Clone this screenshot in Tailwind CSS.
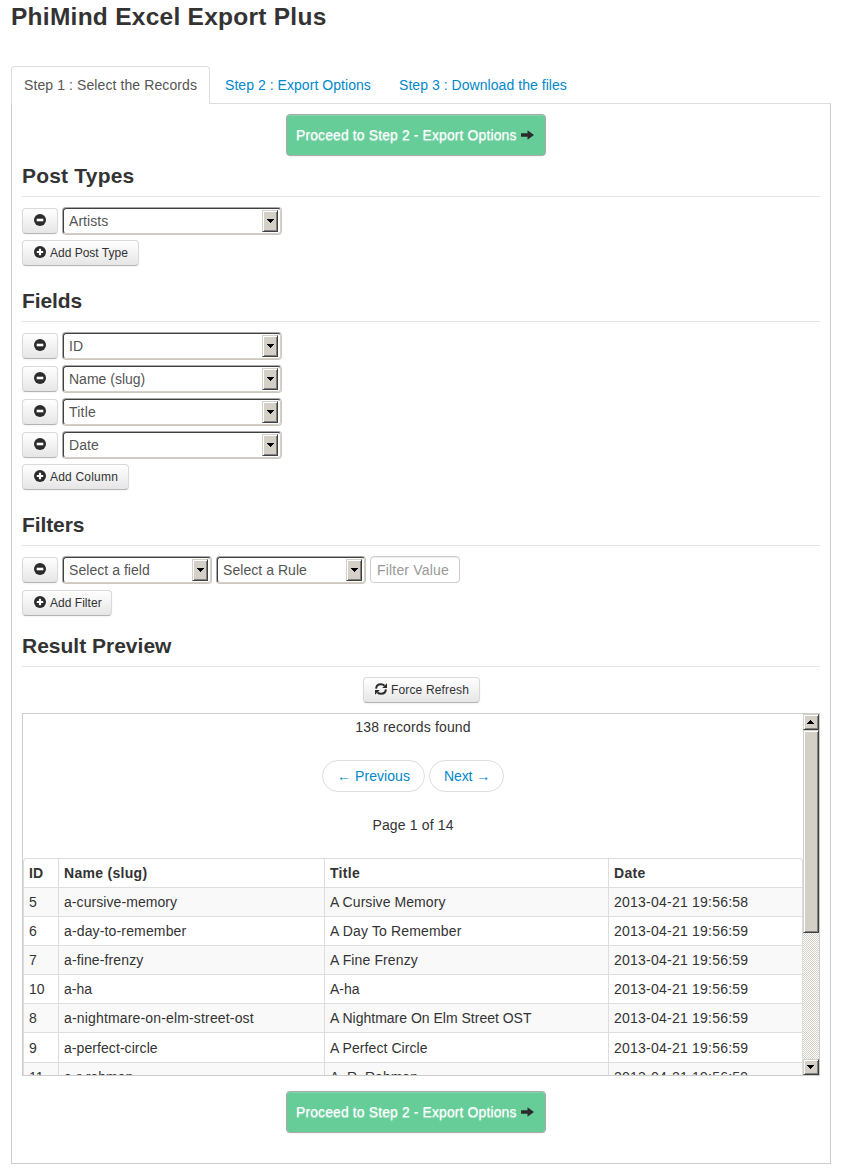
<!DOCTYPE html>
<html lang="en">
<head>
<meta charset="utf-8">
<title>PhiMind Excel Export Plus</title>
<script src="https://cdn.jsdelivr.net/npm/@tailwindcss/browser@4"></script>
</head>
<body class="bg-white font-['Liberation_Sans',Arial,sans-serif] text-[14px] leading-5 text-[#333]">
<svg class="hidden">
  <symbol id="minus" viewBox="0 0 12 12"><circle cx="6" cy="6" r="6" fill="#2b2b2b"/><rect x="2.7" y="4.7" width="6.6" height="2.6" fill="#fff"/></symbol>
  <symbol id="plus" viewBox="0 0 12 12"><circle cx="6" cy="6" r="6" fill="#2b2b2b"/><path d="M4.9 2.8h2.2v2.1h2.1v2.2H7.1v2.1H4.9V7.1H2.8V4.9h2.1z" fill="#fff"/></symbol>
  <symbol id="arrow" viewBox="0 0 13 10"><path d="M0 3.3h6.5V0.3L13 5 6.5 9.7V6.7H0z" fill="#2b2b2b"/></symbol>
  <symbol id="refresh" viewBox="0 0 12 12"><path d="M1.1 5.6C1.3 2.9 3.4 1.2 6 1.2c1.500 0 2.700.6 3.500 1.500M10.900 6.400C10.700 9.100 8.600 10.800 6 10.800c-1.500 0-2.700-.6-3.500-1.500" fill="none" stroke="#2b2b2b" stroke-width="2"/><path d="M12 .2V5H7.200zM0 11.800V7h4.800z" fill="#2b2b2b"/></symbol>
  <symbol id="down" viewBox="0 0 7 4"><path d="M0 0h7v1H0zM1 1h5v1H1zM2 2h3v1H2zM3 3h1v1H3z" fill="#000" shape-rendering="crispEdges"/></symbol>
</svg>

<div class="ml-[11px] w-[820px]">
  <h1 class="flex h-[66px] items-start whitespace-nowrap pt-0.5 text-[24.5px] font-bold leading-[30px] tracking-[0.26px]">PhiMind Excel Export Plus</h1>

  <nav class="flex h-[38px] items-stretch border-b border-[#ddd] leading-5">
    <a class="-mb-px w-[199px] whitespace-nowrap rounded-t border border-b-0 border-[#ddd] bg-white pl-3 pt-2 tracking-[0.095px] text-[#555]">Step 1 : Select the Records</a>
    <a class="ml-[15px] w-[174px] whitespace-nowrap pt-[9px] tracking-[0.05px] text-[#08c]">Step 2 : Export Options</a>
    <a class="whitespace-nowrap pt-[9px] tracking-[0.05px] text-[#08c]">Step 3 : Download the files</a>
  </nav>

  <main class="h-[1060px] border border-t-0 border-[#ccc] px-[10px] pt-[10px]">
    <button class="ml-[264px] flex h-[42px] w-[260px] items-center rounded border border-[#aaa] bg-[#66cd99] pl-[9px] text-white shadow-[inset_0_1px_0_rgba(255,255,255,0.2),0_1px_2px_rgba(0,0,0,0.05)]">
      <span class="whitespace-nowrap tracking-[0.1px] [text-shadow:0_1px_1px_rgba(255,255,255,0.6)]">Proceed to Step 2 - Export Options</span>
      <svg class="ml-1 h-[10px] w-[13px]"><use href="#arrow"/></svg>
    </button>

    <h2 class="h-[41px] border-b border-[#e5e5e5] text-[21px] font-bold leading-10 tracking-[0.2px]">Post Types</h2>
    <div class="mt-[10px] flex h-7 items-center gap-1">
      <button class="flex h-[26px] w-9 justify-center rounded border border-[#d9d9d9] border-b-[#b3b3b3] bg-linear-to-b from-white to-[#e6e6e6] pt-[5px] shadow-[0_1px_2px_rgba(0,0,0,0.05)]"><svg class="size-3"><use href="#minus"/></svg></button>
      <div class="h-7 w-[220px] rounded border border-[#ccc8c0] border-t-[#aaa] border-l-[#aaa]"><div class="flex h-[26px] items-center justify-between rounded-[3px] border border-[#d4d0c8] border-t-[#404040] border-l-[#404040] bg-white pl-[5px] pr-0.5 text-[#555]"><span class="tracking-[0.04px]">Artists</span><span class="flex h-[22px] w-4 items-center justify-center border border-[#404040] border-t-[#d4d0c8] border-l-[#d4d0c8] bg-[#d4d0c8] shadow-[inset_1px_1px_0_#fff,inset_-1px_-1px_0_#808080]"><svg class="h-1 w-[7px]"><use href="#down"/></svg></span></div></div>
    </div>
    <button class="mt-[5px] flex h-[26px] w-[117px] gap-1 whitespace-nowrap rounded border border-[#d9d9d9] border-b-[#b3b3b3] bg-linear-to-b from-white to-[#e6e6e6] pl-[11px] text-xs leading-6 shadow-[0_1px_2px_rgba(0,0,0,0.05)]"><svg class="mt-[5px] size-3"><use href="#plus"/></svg>Add Post Type</button>

    <h2 class="mt-[15px] h-[41px] border-b border-[#e5e5e5] text-[21px] font-bold leading-10 tracking-[-0.1px]">Fields</h2>
    <div class="mt-[10px] flex flex-col gap-[5px]">
      <div class="flex h-7 items-center gap-1">
        <button class="flex h-[26px] w-9 justify-center rounded border border-[#d9d9d9] border-b-[#b3b3b3] bg-linear-to-b from-white to-[#e6e6e6] pt-[5px] shadow-[0_1px_2px_rgba(0,0,0,0.05)]"><svg class="size-3"><use href="#minus"/></svg></button>
        <div class="h-7 w-[220px] rounded border border-[#ccc8c0] border-t-[#aaa] border-l-[#aaa]"><div class="flex h-[26px] items-center justify-between rounded-[3px] border border-[#d4d0c8] border-t-[#404040] border-l-[#404040] bg-white pl-[5px] pr-0.5 text-[#555]"><span>ID</span><span class="flex h-[22px] w-4 items-center justify-center border border-[#404040] border-t-[#d4d0c8] border-l-[#d4d0c8] bg-[#d4d0c8] shadow-[inset_1px_1px_0_#fff,inset_-1px_-1px_0_#808080]"><svg class="h-1 w-[7px]"><use href="#down"/></svg></span></div></div>
      </div>
      <div class="flex h-7 items-center gap-1">
        <button class="flex h-[26px] w-9 justify-center rounded border border-[#d9d9d9] border-b-[#b3b3b3] bg-linear-to-b from-white to-[#e6e6e6] pt-[5px] shadow-[0_1px_2px_rgba(0,0,0,0.05)]"><svg class="size-3"><use href="#minus"/></svg></button>
        <div class="h-7 w-[220px] rounded border border-[#ccc8c0] border-t-[#aaa] border-l-[#aaa]"><div class="flex h-[26px] items-center justify-between rounded-[3px] border border-[#d4d0c8] border-t-[#404040] border-l-[#404040] bg-white pl-[5px] pr-0.5 text-[#555]"><span>Name (slug)</span><span class="flex h-[22px] w-4 items-center justify-center border border-[#404040] border-t-[#d4d0c8] border-l-[#d4d0c8] bg-[#d4d0c8] shadow-[inset_1px_1px_0_#fff,inset_-1px_-1px_0_#808080]"><svg class="h-1 w-[7px]"><use href="#down"/></svg></span></div></div>
      </div>
      <div class="flex h-7 items-center gap-1">
        <button class="flex h-[26px] w-9 justify-center rounded border border-[#d9d9d9] border-b-[#b3b3b3] bg-linear-to-b from-white to-[#e6e6e6] pt-[5px] shadow-[0_1px_2px_rgba(0,0,0,0.05)]"><svg class="size-3"><use href="#minus"/></svg></button>
        <div class="h-7 w-[220px] rounded border border-[#ccc8c0] border-t-[#aaa] border-l-[#aaa]"><div class="flex h-[26px] items-center justify-between rounded-[3px] border border-[#d4d0c8] border-t-[#404040] border-l-[#404040] bg-white pl-[5px] pr-0.5 text-[#555]"><span class="tracking-[0.2px]">Title</span><span class="flex h-[22px] w-4 items-center justify-center border border-[#404040] border-t-[#d4d0c8] border-l-[#d4d0c8] bg-[#d4d0c8] shadow-[inset_1px_1px_0_#fff,inset_-1px_-1px_0_#808080]"><svg class="h-1 w-[7px]"><use href="#down"/></svg></span></div></div>
      </div>
      <div class="flex h-7 items-center gap-1">
        <button class="flex h-[26px] w-9 justify-center rounded border border-[#d9d9d9] border-b-[#b3b3b3] bg-linear-to-b from-white to-[#e6e6e6] pt-[5px] shadow-[0_1px_2px_rgba(0,0,0,0.05)]"><svg class="size-3"><use href="#minus"/></svg></button>
        <div class="h-7 w-[220px] rounded border border-[#ccc8c0] border-t-[#aaa] border-l-[#aaa]"><div class="flex h-[26px] items-center justify-between rounded-[3px] border border-[#d4d0c8] border-t-[#404040] border-l-[#404040] bg-white pl-[5px] pr-0.5 text-[#555]"><span class="tracking-[0.1px]">Date</span><span class="flex h-[22px] w-4 items-center justify-center border border-[#404040] border-t-[#d4d0c8] border-l-[#d4d0c8] bg-[#d4d0c8] shadow-[inset_1px_1px_0_#fff,inset_-1px_-1px_0_#808080]"><svg class="h-1 w-[7px]"><use href="#down"/></svg></span></div></div>
      </div>
    </div>
    <button class="mt-[5px] flex h-[26px] w-[107px] gap-1 whitespace-nowrap rounded border border-[#d9d9d9] border-b-[#b3b3b3] bg-linear-to-b from-white to-[#e6e6e6] pl-[11px] text-xs leading-6 tracking-[0.2px] shadow-[0_1px_2px_rgba(0,0,0,0.05)]"><svg class="mt-[5px] size-3"><use href="#plus"/></svg>Add Column</button>

    <h2 class="mt-[15px] h-[41px] border-b border-[#e5e5e5] text-[21px] font-bold leading-10 tracking-[-0.1px]">Filters</h2>
    <div class="mt-[10px] flex h-7 items-center gap-1">
      <button class="flex h-[26px] w-9 justify-center rounded border border-[#d9d9d9] border-b-[#b3b3b3] bg-linear-to-b from-white to-[#e6e6e6] pt-[5px] shadow-[0_1px_2px_rgba(0,0,0,0.05)]"><svg class="size-3"><use href="#minus"/></svg></button>
      <div class="h-7 w-[150px] rounded border border-[#ccc8c0] border-t-[#aaa] border-l-[#aaa]"><div class="flex h-[26px] items-center justify-between rounded-[3px] border border-[#d4d0c8] border-t-[#404040] border-l-[#404040] bg-white pl-[5px] pr-0.5 text-[#555]"><span class="tracking-[0.05px]">Select a field</span><span class="flex h-[22px] w-4 items-center justify-center border border-[#404040] border-t-[#d4d0c8] border-l-[#d4d0c8] bg-[#d4d0c8] shadow-[inset_1px_1px_0_#fff,inset_-1px_-1px_0_#808080]"><svg class="h-1 w-[7px]"><use href="#down"/></svg></span></div></div>
      <div class="h-7 w-[150px] rounded border border-[#ccc8c0] border-t-[#aaa] border-l-[#aaa]"><div class="flex h-[26px] items-center justify-between rounded-[3px] border border-[#d4d0c8] border-t-[#404040] border-l-[#404040] bg-white pl-[5px] pr-0.5 text-[#555]"><span class="tracking-[0.05px]">Select a Rule</span><span class="flex h-[22px] w-4 items-center justify-center border border-[#404040] border-t-[#d4d0c8] border-l-[#d4d0c8] bg-[#d4d0c8] shadow-[inset_1px_1px_0_#fff,inset_-1px_-1px_0_#808080]"><svg class="h-1 w-[7px]"><use href="#down"/></svg></span></div></div>
      <div class="h-[27px] w-[90px] self-start whitespace-nowrap rounded border border-[#ccc] pl-[6px] leading-[26px] tracking-[0.18px] text-[#999] shadow-[inset_0_1px_1px_rgba(0,0,0,0.075)]">Filter Value</div>
    </div>
    <button class="mt-[6px] flex h-[26px] w-[90px] gap-1 whitespace-nowrap rounded border border-[#d9d9d9] border-b-[#b3b3b3] bg-linear-to-b from-white to-[#e6e6e6] pl-[11px] text-xs leading-6 tracking-[0.03px] shadow-[0_1px_2px_rgba(0,0,0,0.05)]"><svg class="mt-[5px] size-3"><use href="#plus"/></svg>Add Filter</button>

    <h2 class="mt-[10px] h-[41px] border-b border-[#e5e5e5] text-[21px] font-bold leading-10">Result Preview</h2>
    <button class="ml-[341px] mt-[10px] flex h-[26px] w-[117px] gap-1 whitespace-nowrap rounded border border-[#d9d9d9] border-b-[#b3b3b3] bg-linear-to-b from-white to-[#e6e6e6] pl-[11px] text-xs leading-6 tracking-[0.15px] shadow-[0_1px_2px_rgba(0,0,0,0.05)]"><svg class="mt-[5px] size-3"><use href="#refresh"/></svg>Force Refresh</button>

    <section class="mt-[10px] flex h-[363px] border border-[#ccc]">
      <div class="w-[780px] overflow-hidden">
        <p class="mt-[3px] text-center tracking-[0.15px]">138 records found</p>
        <div class="ml-[299px] mt-[23px] flex h-8 gap-1 leading-[30px] text-[#08c]">
          <a class="w-[103px] whitespace-nowrap rounded-full border border-[#ddd] pl-[14px] tracking-[0.06px]">← Previous</a>
          <a class="w-[75px] whitespace-nowrap rounded-full border border-[#ddd] pl-[14px] tracking-[-0.1px]">Next →</a>
        </div>
        <p class="mt-[23px] text-center tracking-[0.15px]">Page 1 of 14</p>
        <div class="mt-[23px] h-[260px] rounded-t border border-b-0 border-[#ddd] *:grid *:grid-cols-[35px_266px_284px_1fr] *:border-b *:border-[#ddd] *:*:whitespace-nowrap *:*:border-[#ddd] *:*:pl-[5px] *:*:pt-[4px] *:*:not-last:border-r">
          <div class="h-[29px] font-bold tracking-[0.3px]"><div class="tracking-normal">ID</div><div>Name (slug)</div><div>Title</div><div>Date</div></div>
          <div class="h-[29px] bg-[#f9f9f9] tracking-[0.07px]"><div>5</div><div>a-cursive-memory</div><div>A Cursive Memory</div><div class="tracking-[0.23px]">2013-04-21 19:56:58</div></div>
          <div class="h-[29px] tracking-[0.15px]"><div>6</div><div>a-day-to-remember</div><div>A Day To Remember</div><div class="tracking-[0.23px]">2013-04-21 19:56:59</div></div>
          <div class="h-[29px] bg-[#f9f9f9] tracking-[0.12px]"><div>7</div><div>a-fine-frenzy</div><div>A Fine Frenzy</div><div class="tracking-[0.23px]">2013-04-21 19:56:59</div></div>
          <div class="h-[29px]"><div>10</div><div>a-ha</div><div>A-ha</div><div class="tracking-[0.23px]">2013-04-21 19:56:59</div></div>
          <div class="h-[29px] bg-[#f9f9f9]"><div>8</div><div class="tracking-[0.16px]">a-nightmare-on-elm-street-ost</div><div>A Nightmare On Elm Street OST</div><div class="tracking-[0.23px]">2013-04-21 19:56:59</div></div>
          <div class="h-[30px] leading-[22px] tracking-[0.07px]"><div>9</div><div>a-perfect-circle</div><div>A Perfect Circle</div><div class="tracking-[0.23px]">2013-04-21 19:56:59</div></div>
          <div class="h-[29px] bg-[#f9f9f9]"><div>11</div><div>a-r-rahman</div><div>A. R. Rahman</div><div class="tracking-[0.23px]">2013-04-21 19:56:59</div></div>
        </div>
      </div>
      <div class="flex w-4 flex-col bg-[repeating-conic-gradient(#d4d0c8_0_25%,#fff_0_50%)] bg-size-[2px_2px]">
        <span class="flex h-4 items-center justify-center border border-[#404040] border-t-[#d4d0c8] border-l-[#d4d0c8] bg-[#d4d0c8] pr-px shadow-[inset_1px_1px_0_#fff,inset_-1px_-1px_0_#808080]"><svg class="h-1 w-[7px] rotate-180"><use href="#down"/></svg></span>
        <span class="h-[203px] border border-[#404040] border-t-[#d4d0c8] border-l-[#d4d0c8] bg-[#d4d0c8] shadow-[inset_1px_1px_0_#fff,inset_-1px_-1px_0_#808080]"></span>
        <span class="mt-auto flex h-4 items-center justify-center border border-[#404040] border-t-[#d4d0c8] border-l-[#d4d0c8] bg-[#d4d0c8] pr-px shadow-[inset_1px_1px_0_#fff,inset_-1px_-1px_0_#808080]"><svg class="h-1 w-[7px]"><use href="#down"/></svg></span>
      </div>
    </section>

    <button class="ml-[264px] mt-[15px] flex h-[42px] w-[260px] items-center rounded border border-[#aaa] bg-[#66cd99] pl-[9px] text-white shadow-[inset_0_1px_0_rgba(255,255,255,0.2),0_1px_2px_rgba(0,0,0,0.05)]">
      <span class="whitespace-nowrap tracking-[0.1px] [text-shadow:0_1px_1px_rgba(255,255,255,0.6)]">Proceed to Step 2 - Export Options</span>
      <svg class="ml-1 h-[10px] w-[13px]"><use href="#arrow"/></svg>
    </button>
  </main>
</div>
</body>
</html>
